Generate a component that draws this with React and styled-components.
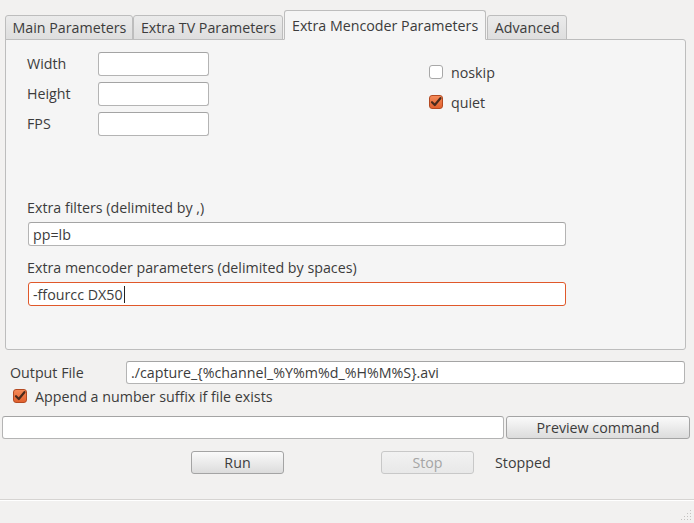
import React from "react";
import styled, { createGlobalStyle } from "styled-components";

const GlobalStyle = createGlobalStyle`
  html, body {
    margin: 0;
    padding: 0;
    background: #f2f1f0;
  }
  body {
    font-family: "Open Sans", "DejaVu Sans", sans-serif;
    font-size: 14.25px;
    color: #3c3c3c;
  }
`;

const tabs = [
  "Main Parameters",
  "Extra TV Parameters",
  "Extra Mencoder Parameters",
  "Advanced",
];

const Window = styled.div`
  width: 694px;
  height: 523px;
  display: flex;
  flex-direction: column;
  background: #f2f1f0;
  overflow: hidden;
`;

const TabArea = styled.div`
  padding: 10px 8px 0 5px;
`;

const TabBar = styled.div`
  display: flex;
  align-items: flex-end;
  height: 30px;
  margin-bottom: -1px;
  position: relative;
  z-index: 1;
`;

const Tab = styled.div`
  height: ${(p) => (p.$active ? "30px" : "25px")};
  padding: 0 ${(p) => (p.$active ? 7 : 6)}px 0 ${(p) => (p.$active ? 7 : 6.5)}px;
  display: flex;
  align-items: center;
  box-sizing: border-box;
  border: 1px solid #bdbdbd;
  border-bottom: ${(p) => (p.$active ? "1px solid #f5f5f5" : "1px solid #bdbdbd")};
  border-radius: 3px 3px 0 0;
  margin-left: ${(p) => (p.$active ? "1px" : "0")};
  margin-right: ${(p) => (p.$active ? "1px" : "0")};
  background: ${(p) =>
    p.$active ? "#f5f5f5" : "linear-gradient(#ebebeb, #dedede)"};
  white-space: nowrap;
  & + & {
    border-left: ${(p) => (p.$active ? "1px solid #bdbdbd" : "none")};
  }
`;

const Pane = styled.div`
  height: 311px;
  box-sizing: border-box;
  border: 1px solid #bdbdbd;
  border-radius: 0 3px 3px 3px;
  background: #f5f5f5;
  padding: 12px 0 0 21px;
`;

const TopSection = styled.div`
  display: flex;
  align-items: flex-start;
`;

const FormGrid = styled.div`
  display: grid;
  grid-template-columns: 71px 111px;
  row-gap: 6px;
  align-items: center;
`;

const Label = styled.span`
  line-height: 18px;
`;

const Field = styled.div`
  box-sizing: border-box;
  height: ${(p) => p.$h || 24}px;
  width: ${(p) => (p.$w ? `${p.$w}px` : "auto")};
  flex: ${(p) => (p.$grow ? 1 : "none")};
  background: #fff;
  border: 1px solid ${(p) => (p.$focus ? "#e0582a" : "#b4b4b4")};
  border-top-color: ${(p) => (p.$focus ? "#e0582a" : "#a4a4a4")};
  border-radius: 3px;
  padding: 0 4px;
  display: flex;
  align-items: center;
  white-space: nowrap;
  overflow: hidden;
`;

const Caret = styled.span`
  display: inline-block;
  width: 1px;
  height: 17px;
  background: #222;
  margin-left: 1px;
`;

const CheckColumn = styled.div`
  display: flex;
  flex-direction: column;
  gap: 6px;
  margin: 8px 0 0 220px;
`;

const CheckRow = styled.label`
  display: flex;
  align-items: center;
  gap: 8px;
  height: 24px;
  margin-left: ${(p) => p.$indent || 0}px;
`;

const Box = styled.span`
  width: 14px;
  height: 14px;
  box-sizing: border-box;
  border-radius: 3px;
  border: 1px solid ${(p) => (p.$checked ? "#b44a22" : "#a8a8a8")};
  background: ${(p) =>
    p.$checked ? "linear-gradient(#f58a58, #e1612f)" : "#ffffff"};
  display: flex;
  align-items: center;
  justify-content: center;
`;

const LowerSection = styled.div`
  margin-top: 63px;
  display: flex;
  flex-direction: column;
  width: 538px;
  padding-left: 1px;
`;

const FieldLabel = styled.span`
  line-height: 18px;
  margin-bottom: 5px;
  margin-left: -1px;
  margin-top: ${(p) => p.$mt || 0}px;
`;

const Bottom = styled.div`
  display: flex;
  flex-direction: column;
  padding: 0 4px 0 2px;
`;

const OutputRow = styled.div`
  display: flex;
  align-items: center;
  margin-top: 11px;
  padding-left: 8px;
  padding-right: 5px;
`;

const OutputLabel = styled.span`
  width: 116px;
`;

const CommandRow = styled.div`
  display: flex;
  align-items: center;
  gap: 2px;
  margin-top: 8px;
`;

const Button = styled.button`
  box-sizing: border-box;
  height: 23px;
  width: ${(p) => (p.$w ? `${p.$w}px` : "auto")};
  margin-left: ${(p) => p.$ml || 0}px;
  font: inherit;
  color: ${(p) => (p.disabled ? "#a5a5a5" : "#3c3c3c")};
  border: 1px solid ${(p) => (p.disabled ? "#c8c8c8" : "#a4a4a4")};
  border-radius: 3px;
  background: ${(p) =>
    p.disabled
      ? "linear-gradient(#f2f2f2, #e8e8e8)"
      : "linear-gradient(#fafafa, #dcdcdc)"};
  padding: 0;
  display: flex;
  align-items: center;
  justify-content: center;
`;

const RunRow = styled.div`
  display: flex;
  align-items: center;
  margin-top: 12px;
  padding-left: 189px;
`;

const Status = styled.span`
  margin-left: 21px;
`;

const StatusBar = styled.div`
  margin-top: auto;
  height: 21px;
  border-top: 1px solid #d6d4d2;
  box-shadow: inset 0 1px 0 #ffffff;
  display: flex;
  justify-content: flex-end;
  align-items: flex-end;
  padding: 0 2px 2px 0;
`;

const CheckMark = () => (
  <svg width="12" height="12" viewBox="0 0 12 12">
    <path
      d="M2 6.2 L4.8 9 L10.4 2.2"
      fill="none"
      stroke="#4a2a1c"
      strokeWidth="2.2"
      strokeLinecap="round"
      strokeLinejoin="round"
    />
  </svg>
);

const Grip = () => (
  <svg width="12" height="12" viewBox="0 0 12 12">
    {[
      [10, 2],
      [10, 5],
      [7, 5],
      [10, 8],
      [7, 8],
      [4, 8],
      [10, 11],
      [7, 11],
      [4, 11],
      [1, 11],
    ].map(([x, y], i) => (
      <rect key={i} x={x} y={y - 1} width="1" height="1" fill="#c4c2c0" />
    ))}
  </svg>
);

const Check = ({ checked, children, indent }) => (
  <CheckRow $indent={indent}>
    <Box $checked={checked}>{checked && <CheckMark />}</Box>
    <span>{children}</span>
  </CheckRow>
);

export default function App() {
  return (
    <>
      <GlobalStyle />
      <Window>
        <TabArea>
          <TabBar>
            {tabs.map((t, i) => (
              <Tab key={t} $active={i === 2}>
                {t}
              </Tab>
            ))}
          </TabBar>
          <Pane>
            <TopSection>
              <FormGrid>
                <Label>Width</Label>
                <Field />
                <Label>Height</Label>
                <Field />
                <Label>FPS</Label>
                <Field />
              </FormGrid>
              <CheckColumn>
                <Check>noskip</Check>
                <Check checked>quiet</Check>
              </CheckColumn>
            </TopSection>
            <LowerSection>
              <FieldLabel>Extra filters (delimited by ,)</FieldLabel>
              <Field>pp=lb</Field>
              <FieldLabel $mt={13}>
                Extra mencoder parameters (delimited by spaces)
              </FieldLabel>
              <Field $focus>
                -ffourcc DX50
                <Caret />
              </Field>
            </LowerSection>
          </Pane>
        </TabArea>
        <Bottom>
          <OutputRow>
            <OutputLabel>Output File</OutputLabel>
            <Field $grow $h={23}>
              ./capture_&#123;%channel_%Y%m%d_%H%M%S&#125;.avi
            </Field>
          </OutputRow>
          <Check checked indent={11}>
            Append a number suffix if file exists
          </Check>
          <CommandRow>
            <Field $w={502} $h={23} />
            <Button $w={184}>Preview command</Button>
          </CommandRow>
          <RunRow>
            <Button $w={93}>Run</Button>
            <Button $w={93} $ml={97} disabled>
              Stop
            </Button>
            <Status>Stopped</Status>
          </RunRow>
        </Bottom>
        <StatusBar>
          <Grip />
        </StatusBar>
      </Window>
    </>
  );
}
